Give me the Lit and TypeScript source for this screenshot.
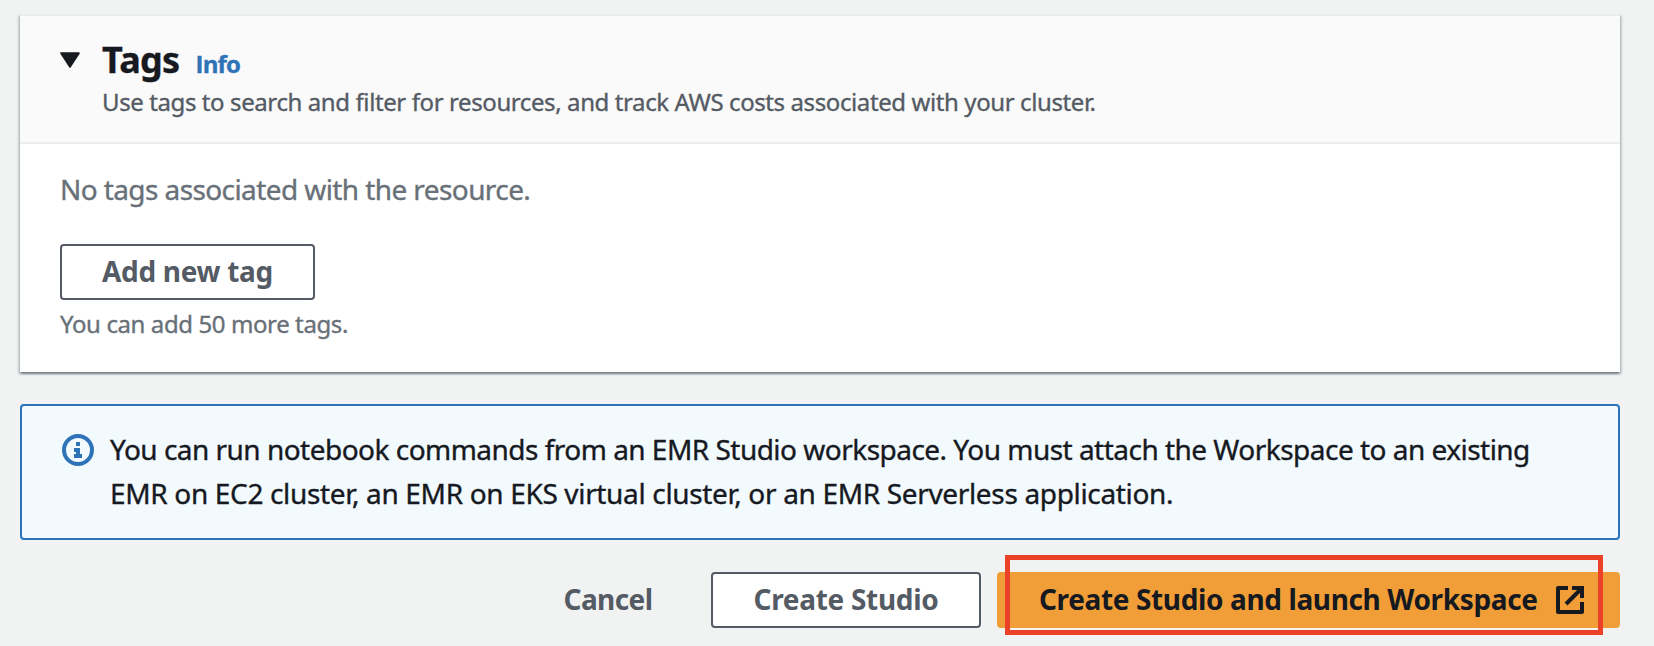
import { LitElement, html, css } from "lit";
import { customElement } from "lit/decorators.js";

@customElement("app-root")
class AppRoot extends LitElement {
  static styles = css`
    :host {
      display: block;
      box-sizing: border-box;
      height: 646px;
      padding: 14px 34px 0 20px;
      overflow: hidden;
      background: #f1f3f3;
      color: #16191f;
      font-family: "Noto Sans", sans-serif;
      font-size: 28px;
      line-height: 44px;
      -webkit-text-stroke: 0.35px currentColor;
    }
    h2, p { margin: 0; }
    .card {
      box-sizing: border-box;
      height: 358px;
      border-top: 2px solid #eaeded;
      background: #fff;
      box-shadow: 0 2px 2px 0 rgba(0, 28, 36, 0.35), 2px 2px 2px 0 rgba(0, 28, 36, 0.15),
        -2px 2px 2px 0 rgba(0, 28, 36, 0.15);
    }
    .card-header {
      box-sizing: border-box;
      display: flex;
      height: 128px;
      padding: 22px 40px 0;
      border-bottom: 2px solid #eaeded;
      background: #fafafa;
    }
    .caret { flex: none; width: 20px; height: 17px; margin: 14px 22px 0 0; }
    .heading { display: flex; align-items: baseline; gap: 16px; }
    h2 { font-size: 36px; line-height: 44px; font-weight: 700; letter-spacing: -0.7px; }
    .info { font: 700 24px/30px "Open Sans", sans-serif; letter-spacing: -0.8px; color: #2e73b8; }
    .desc { margin-top: 5px; font-size: 24px; line-height: 30px; letter-spacing: -0.4px; color: #545b64; }
    .card-body { display: flex; flex-direction: column; align-items: flex-start; padding: 23px 40px 0; }
    .empty { margin-bottom: 33px; letter-spacing: -0.59px; color: #687078; }
    .hint { margin-top: 9px; font-size: 24px; line-height: 30px; letter-spacing: -0.4px; color: #687078; }
    button {
      box-sizing: border-box;
      display: flex;
      align-items: center;
      justify-content: center;
      height: 56px;
      padding: 0 0 2px;
      border: 2px solid #545b64;
      border-radius: 4px;
      background: #fff;
      color: #545b64;
      font: 700 28px/50px "Noto Sans", sans-serif;
      letter-spacing: -0.3px;
      -webkit-text-stroke: 0;
      white-space: nowrap;
    }
    .add { width: 255px; }
    .alert {
      box-sizing: border-box;
      display: flex;
      height: 136px;
      margin-top: 32px;
      padding: 21px 38px 0 40px;
      border: 2px solid #2e73b8;
      border-radius: 4px;
      background: #f2fafd;
    }
    .info-icon { flex: none; width: 32px; height: 32px; margin: 7px 16px 0 0; }
    .line1 { letter-spacing: -0.52px; white-space: nowrap; }
    .line2 { letter-spacing: -0.34px; white-space: nowrap; }
    .actions { display: flex; justify-content: flex-end; gap: 16px; margin-top: 32px; }
    .cancel {
      width: 170px;
      margin-right: 2px;
      border-color: transparent;
      background: transparent;
      letter-spacing: -0.6px;
    }
    .studio { width: 270px; }
    .launch-wrap { position: relative; }
    .launch {
      width: 623px;
      justify-content: flex-start;
      padding-left: 40px;
      border-color: #f19e38;
      background: #f19e38;
      color: #16191f;
      letter-spacing: -0.37px;
    }
    .label { width: 500px; text-align: left; }
    .launch svg { flex: none; width: 28px; height: 28px; margin: 2px 0 0 17px; }
    .highlight {
      position: absolute;
      box-sizing: border-box;
      left: 8px;
      top: -17px;
      width: 598px;
      height: 80px;
      border: 5px solid #eb4128;
      pointer-events: none;
    }
  `;

  render() {
    return html`
      <section class="card">
        <div class="card-header">
          <svg class="caret" viewBox="0 0 20 17">
            <path d="M1.2 1.2H18.8L10 14.8Z" fill="#16191f" stroke="#16191f" stroke-width="2" stroke-linejoin="round" />
          </svg>
          <div>
            <div class="heading"><h2>Tags</h2><span class="info">Info</span></div>
            <p class="desc">Use tags to search and filter for resources, and track AWS costs associated with your cluster.</p>
          </div>
        </div>
        <div class="card-body">
          <p class="empty">No tags associated with the resource.</p>
          <button class="add">Add new tag</button>
          <p class="hint">You can add 50 more tags.</p>
        </div>
      </section>
      <section class="alert">
        <svg class="info-icon" viewBox="0 0 32 32" fill="#2e73b8">
          <circle cx="16" cy="16" r="14" fill="none" stroke="#2e73b8" stroke-width="4" />
          <path d="M14 8h4v4h-4zM12 14h6v6h2v4h-8v-4h2v-2h-2z" />
        </svg>
        <div>
          <div class="line1">You can run notebook commands from an EMR Studio workspace. You must attach the Workspace to an existing</div>
          <div class="line2">EMR on EC2 cluster, an EMR on EKS virtual cluster, or an EMR Serverless application.</div>
        </div>
      </section>
      <div class="actions">
        <button class="cancel">Cancel</button>
        <button class="studio">Create Studio</button>
        <div class="launch-wrap">
          <button class="launch">
            <span class="label">Create Studio and launch Workspace</span>
            <svg viewBox="0 0 28 28" fill="none" stroke="#16191f" stroke-width="4">
              <path d="M12 2H2V26H26V16" stroke-linejoin="round" />
              <path d="M16 2H26V12M25.5 2.5L10 18" />
            </svg>
          </button>
          <div class="highlight"></div>
        </div>
      </div>
    `;
  }
}
